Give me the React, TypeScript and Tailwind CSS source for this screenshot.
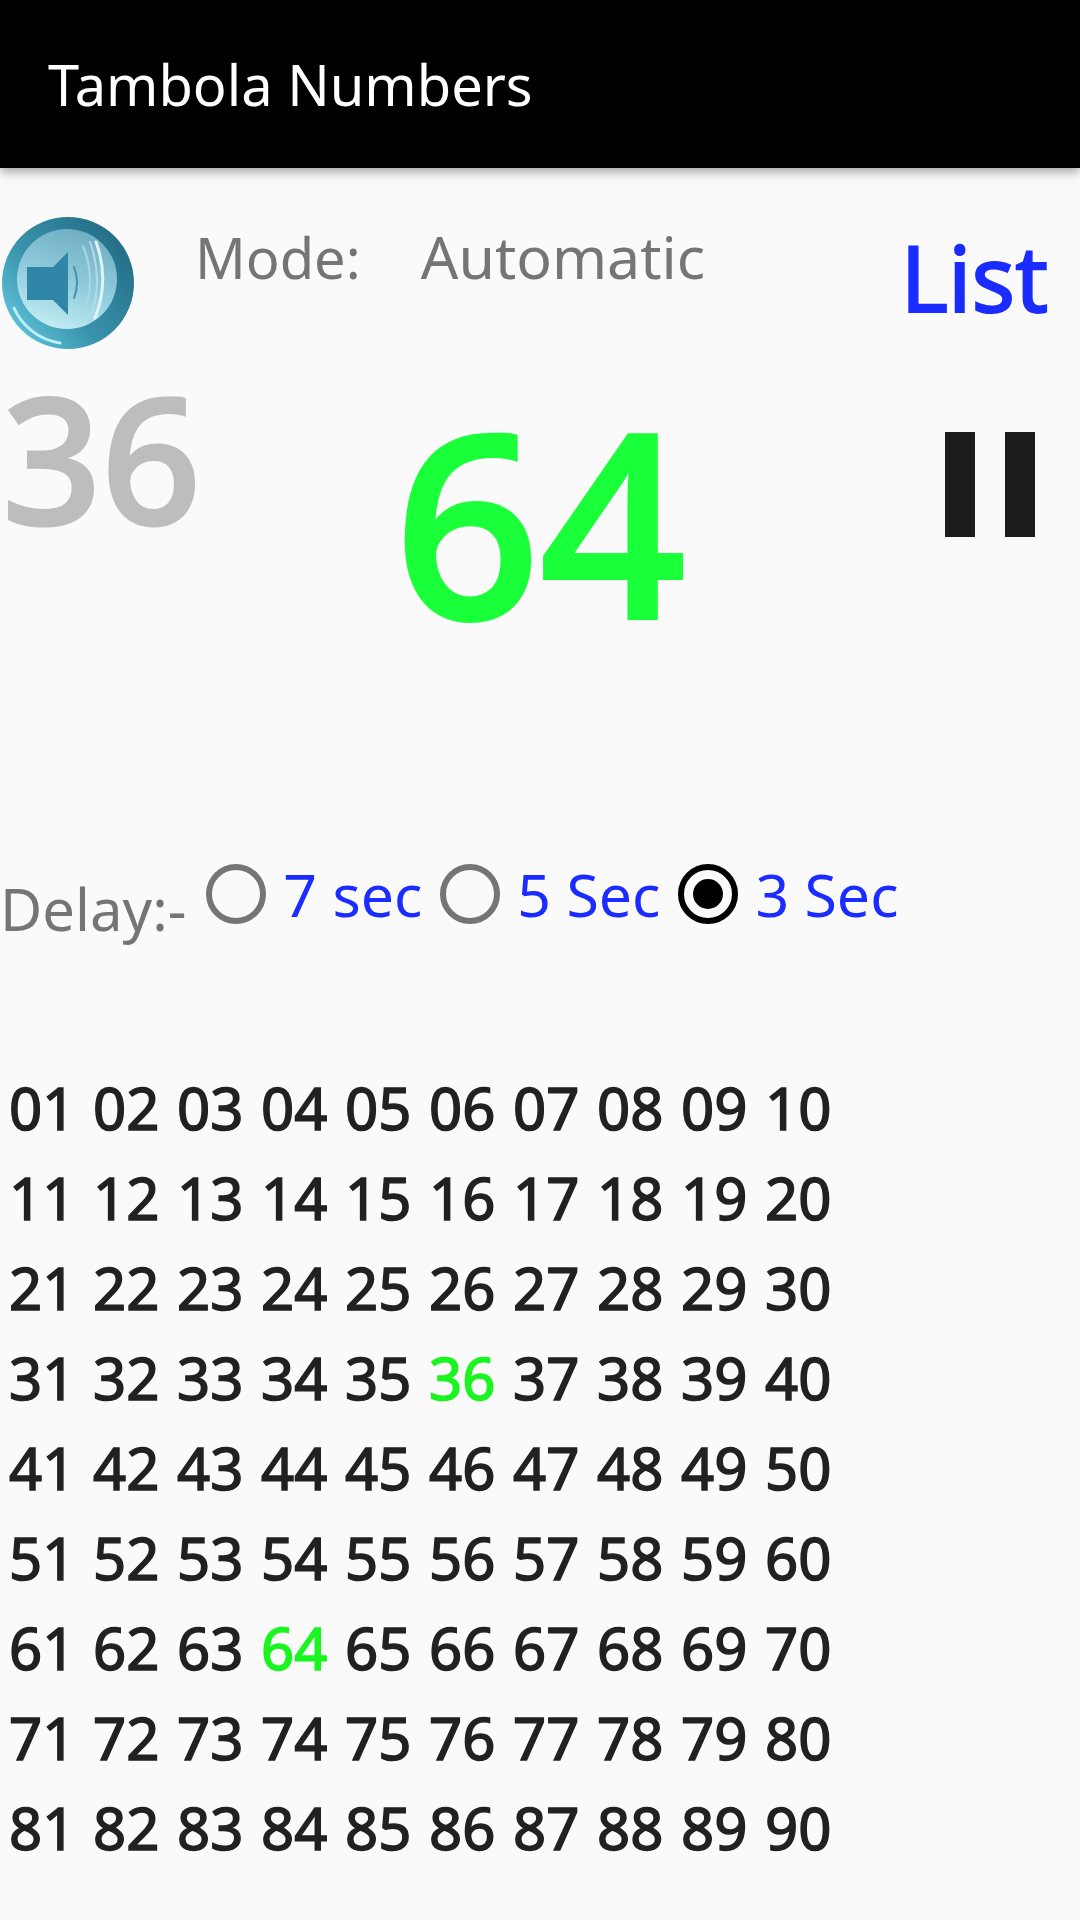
const ROWS = Array.from({ length: 9 }, (_, row) =>
  Array.from({ length: 10 }, (_, col) => String(row * 10 + col + 1).padStart(2, "0")),
);
const CALLED = ["36", "64"];
const DELAYS = [
  { label: "7 sec", checked: false },
  { label: "5 Sec", checked: false },
  { label: "3 Sec", checked: true },
];

function SpeakerIcon() {
  return (
    <svg width="136" height="136" viewBox="0 0 136 136" className="block shrink-0">
      <defs>
        <linearGradient id="rim" x1="0.1" y1="0.85" x2="0.9" y2="0.2">
          <stop offset="0" stopColor="#5cc0d6" />
          <stop offset="0.4" stopColor="#3a93ad" />
          <stop offset="1" stopColor="#246f88" />
        </linearGradient>
        <linearGradient id="face" x1="0.3" y1="1" x2="0.65" y2="0">
          <stop offset="0" stopColor="#c4edf3" />
          <stop offset="0.45" stopColor="#93cede" />
          <stop offset="1" stopColor="#6fadc3" />
        </linearGradient>
      </defs>
      <circle cx="68" cy="67" r="66" fill="url(#rim)" />
      <path d="M14 92 A60 60 0 0 0 60 127" stroke="#bdeff6" strokeWidth="3" fill="none" strokeLinecap="round" />
      <circle cx="67" cy="63" r="50" fill="url(#face)" />
      <path d="M27 51 H53 L68 36 V99 L53 84 H27 Z" fill="#2f86a6" />
      <g fill="none" strokeLinecap="round">
        <path d="M74 51 Q80 67 74 82" stroke="#3f93ae" strokeWidth="2" />
        <path d="M83 30 Q97 64 83 100" stroke="#a9d8e3" strokeWidth="2" />
        <path d="M90 26 Q104 64 90 104" stroke="#b3dce6" strokeWidth="2" />
        <path d="M96 26 Q110 64 95 102" stroke="#dcf5f8" strokeWidth="3" />
      </g>
    </svg>
  );
}

function Radio({ checked }: { checked: boolean }) {
  return (
    <span
      className={`flex h-[60px] w-[60px] shrink-0 items-center justify-center rounded-full border-[6px] ${
        checked ? "border-black" : "border-[#757575]"
      }`}
    >
      {checked && <span className="h-[30px] w-[30px] rounded-full bg-black" />}
    </span>
  );
}

export default function App() {
  return (
    <div className="h-[1920px] w-[1080px] overflow-hidden bg-[#fafafa] font-['Noto_Sans',sans-serif]">
      <header className="flex h-[168px] items-center bg-black pl-[48px] shadow-[0_4px_10px_rgba(0,0,0,0.35)]">
        <h1 className="text-[56px] leading-none font-normal text-white">Tambola Numbers</h1>
      </header>

      <div className="flex items-start pt-[48px]">
        <SpeakerIcon />
        <div className="mt-[2px] ml-[59px] flex flex-1 items-baseline gap-[60px] leading-[76px] text-[#757575]">
          <span className="text-[56px]">Mode:</span>
          <span className="text-[59px]">Automatic</span>
        </div>
        <button className="mt-[1px] mr-[32px] text-[91px] leading-[120px] font-normal text-[#1a2cff] [-webkit-text-stroke:2px_#1a2cff]">List</button>
      </div>

      <div className="grid grid-cols-[1fr_auto_1fr] items-start">
        <span className="mt-[-15px] ml-[2px] text-[174px] leading-[240px] font-medium text-[#bdbdbd] [-webkit-text-stroke:3px_#bdbdbd]">36</span>
        <span className="text-[255px] leading-[334px] font-medium text-[#19ff3a] [-webkit-text-stroke:4px_#19ff3a]">64</span>
        <div className="mt-[80px] mr-[45px] flex justify-end gap-[30px]">
          <span className="h-[105px] w-[30px] bg-[#1c1c1c]" />
          <span className="h-[105px] w-[30px] bg-[#1c1c1c]" />
        </div>
      </div>

      <div className="mt-[170px] flex items-start text-[59px] leading-[76px]">
        <span className="mt-[15px] mr-[2px] text-[58px] text-[#757575]">Delay:-</span>
        {DELAYS.map((delay) => (
          <label key={delay.label} className="ml-[18px] flex items-center gap-[17px] text-[#1a2cff]">
            <Radio checked={delay.checked} />
            <span>{delay.label}</span>
          </label>
        ))}
      </div>

      <div className="mt-[121px] flex flex-col gap-[10px] pl-[9px]">
        {ROWS.map((row) => (
          <div key={row[0]} className="flex gap-[18px] text-[58px] leading-[80px] font-normal text-[#212121] [-webkit-text-stroke:1.5px_#212121]">
            {row.map((num) => (
              <span
                key={num}
                className={`w-[66px] ${CALLED.includes(num) ? "text-[#19f51e] [-webkit-text-stroke:1.5px_#19f51e]" : ""}`}
              >
                {num}
              </span>
            ))}
          </div>
        ))}
      </div>
    </div>
  );
}
